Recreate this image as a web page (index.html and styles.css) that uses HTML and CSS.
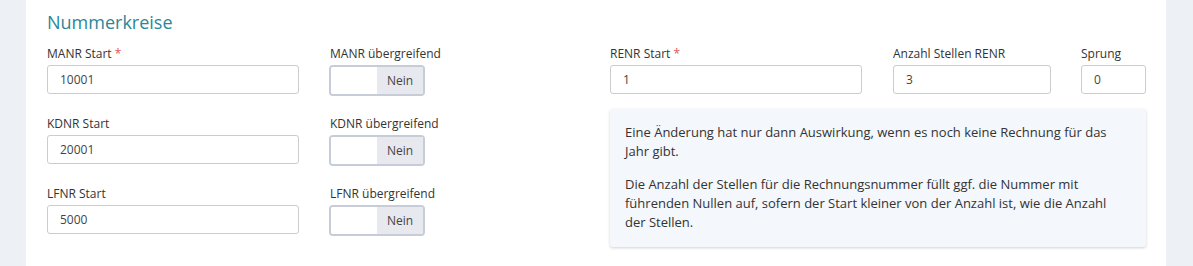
FILE: index.html
```html
<!DOCTYPE html>
<html lang="de">
<head>
  <meta charset="UTF-8" />
  <title>Einstellungen – Nummerkreise</title>
  <link rel="stylesheet" href="styles.css">
</head>
<body>
  <div class="card">
    <h2>Nummerkreise</h2>

    <div class="grid">
      <!-- linke Seite -->
      <div class="half left">
        <div class="field wide">
          <label>MANR Start <span class="req">*</span></label>
          <input type="text" value="10001" />
        </div>
        <div class="field">
          <label>MANR übergreifend</label>
          <div class="toggle"><span class="off"></span><span class="on">Nein</span></div>
        </div>

        <div class="field wide">
          <label>KDNR Start</label>
          <input type="text" value="20001" />
        </div>
        <div class="field">
          <label>KDNR übergreifend</label>
          <div class="toggle"><span class="off"></span><span class="on">Nein</span></div>
        </div>

        <div class="field wide">
          <label>LFNR Start</label>
          <input type="text" value="5000" />
        </div>
        <div class="field">
          <label>LFNR übergreifend</label>
          <div class="toggle"><span class="off"></span><span class="on">Nein</span></div>
        </div>
      </div>

      <!-- rechte Seite -->
      <div class="half right">
        <div class="renr-row">
          <div class="field">
            <label>RENR Start <span class="req">*</span></label>
            <input type="text" value="1" />
          </div>
          <div class="field">
            <label>Anzahl Stellen RENR</label>
            <input type="text" value="3" />
          </div>
          <div class="field">
            <label>Sprung</label>
            <input type="text" value="0" />
          </div>
        </div>

        <div class="info">
          <p>Eine Änderung hat nur dann Auswirkung, wenn es noch keine Rechnung für das Jahr gibt.</p>
          <p>Die Anzahl der Stellen für die Rechnungsnummer füllt ggf. die Nummer mit führenden Nullen auf, sofern der Start kleiner von der Anzahl ist, wie die Anzahl der Stellen.</p>
        </div>
      </div>
    </div>
  </div>
</body>
</html>
```

FILE: styles.css
```css
:root {
  --page-bg: #edf0f5;
  --title-teal: #2a879a;
  --text-color: #333;
  --input-border: #ccc;
  --toggle-border: #c6cdd9;
  --toggle-gray: #e8e9ee;
  --info-bg: #f4f7fb;
  --req-red: #e05555;
}

body {
  margin: 0;
  background: var(--page-bg);
  font-family: 'Open Sans', sans-serif;
  color: var(--text-color);
}

.card {
  margin-left: 26px;
  width: 1140px;
  height: 266px;
  box-sizing: border-box;
  background: white;
  padding: 10px 20px 0 21px;
}

h2 {
  margin: 0 0 11px;
  font-size: 18px;
  font-weight: 400;
  color: var(--title-teal);
  line-height: 24px;
}

.grid {
  display: flex;
  gap: 31px;
}

.half.left {
  width: 533px;
  display: grid;
  grid-template-columns: 252px 1fr;
  column-gap: 31px;
  row-gap: 19px;
  align-content: start;
}

.half.right {
  flex: 1;
}

.field label {
  display: block;
  font-size: 12px;
  line-height: 17px;
  margin-bottom: 3px;
  white-space: nowrap;
}

.req {
  color: var(--req-red);
}

input[type="text"] {
  display: block;
  box-sizing: border-box;
  width: 100%;
  height: 29px;
  border: 1px solid var(--input-border);
  border-radius: 3px;
  padding: 0 12px;
  font-family: inherit;
  font-size: 12px;
  color: #444;
  background: white;
}

.toggle {
  display: flex;
  box-sizing: border-box;
  width: 96px;
  height: 31px;
  margin-left: -1px;
  border: 2px solid var(--toggle-border);
  border-radius: 4px;
  overflow: hidden;
}

.toggle .off {
  flex: 1;
  background: white;
}

.toggle .on {
  width: 46px;
  background: var(--toggle-gray);
  font-size: 12px;
  line-height: 27px;
  text-align: center;
  color: #444;
}

.renr-row {
  display: grid;
  grid-template-columns: 252px 158px 64px;
  column-gap: 31px;
  width: 535px;
}

.renr-row .field:nth-child(3) {
  margin-left: -1px;
}

.info {
  margin-top: 15px;
  width: 536px;
  height: 138px;
  box-sizing: border-box;
  background: var(--info-bg);
  border-radius: 3px;
  box-shadow: 0 1px 3px rgba(0, 0, 0, 0.18);
  padding: 14px 16px 0 15px;
  font-size: 13px;
  line-height: 19px;
}

.info p {
  margin: 0 0 14px;
}

.info p:last-child {
  margin-bottom: 0;
}
```
